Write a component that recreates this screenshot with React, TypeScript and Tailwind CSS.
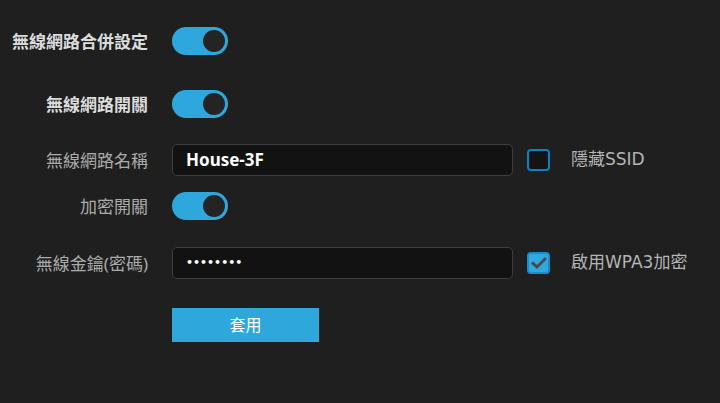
import React from "react";

const font = { fontFamily: '"Noto Sans", "Noto Sans CJK TC", sans-serif' };
const dejavu = { fontFamily: '"DejaVu Sans", "Noto Sans CJK TC", sans-serif' };

function Toggle() {
  return (
    <div className="flex h-[28px] w-[56px] items-center justify-end rounded-full bg-[#2ea7dd] pr-[1px]">
      <div className="h-[26px] w-[26px] rounded-full border-2 border-[#2ea7dd] bg-[#242424]" />
    </div>
  );
}

function Checkbox({ checked }: { checked?: boolean }) {
  if (checked) {
    return (
      <div className="flex h-[22px] w-[23px] items-center justify-center rounded-[4px] border-2 border-[#1a8ccc] bg-[#30a9e0]">
        <svg width="16" height="14" viewBox="0 0 16 14">
          <path d="M2 7.5 L6 11 L14 3" fill="none" stroke="#4a4a4a" strokeWidth="3" strokeLinecap="square" />
        </svg>
      </div>
    );
  }
  return <div className="h-[22px] w-[23px] rounded-[4px] border-2 border-[#0b82c4] bg-[#141414]" />;
}

function Label({ children, bold }: { children: React.ReactNode; bold?: boolean }) {
  return (
    <div
      className={
        "w-[148px] shrink-0 text-right text-[17px] leading-none " +
        (bold ? "font-bold text-[#dcdcdc]" : "text-[#ababab]")
      }
    >
      {children}
    </div>
  );
}

export default function App() {
  return (
    <div className="h-[403px] w-[720px] overflow-hidden bg-[#1f1f1f] pt-[27px]" style={font}>
      <div className="flex h-[28px] items-center">
        <Label bold>無線網路合併設定</Label>
        <div className="ml-[24px]">
          <Toggle />
        </div>
      </div>

      <div className="mt-[35px] flex h-[28px] items-center">
        <Label bold>無線網路開關</Label>
        <div className="ml-[24px]">
          <Toggle />
        </div>
      </div>

      <div className="mt-[26px] flex h-[32px] items-center">
        <Label>無線網路名稱</Label>
        <div className="ml-[24px] flex h-[32px] w-[341px] items-center rounded-[5px] border border-[#3e3e3e] bg-[#121212] pl-[13px] text-[17px] font-bold text-white">
          House-3F
        </div>
        <div className="ml-[14px]">
          <Checkbox />
        </div>
        <div className="ml-[21px] text-[17px] text-[#b4b4b4]" style={dejavu}>
          隱藏SSID
        </div>
      </div>

      <div className="mt-[16px] flex h-[28px] items-center">
        <Label>加密開關</Label>
        <div className="ml-[24px]">
          <Toggle />
        </div>
      </div>

      <div className="mt-[27px] flex h-[32px] items-center">
        <Label>無線金鑰(密碼)</Label>
        <div
          className="ml-[24px] flex h-[32px] w-[341px] items-center rounded-[5px] border border-[#3e3e3e] bg-[#121212] pl-[13px] text-[11px] font-bold text-white"
          style={{ fontFamily: '"DejaVu Sans", sans-serif' }}
        >
          ••••••••
        </div>
        <div className="ml-[14px]">
          <Checkbox checked />
        </div>
        <div className="ml-[21px] text-[17px] text-[#b4b4b4]" style={dejavu}>
          啟用WPA3加密
        </div>
      </div>

      <div className="mt-[29px] flex">
        <div className="ml-[172px] flex h-[34px] w-[147px] items-center justify-center bg-[#2ea7db] text-[16px] text-white">
          套用
        </div>
      </div>
    </div>
  );
}
